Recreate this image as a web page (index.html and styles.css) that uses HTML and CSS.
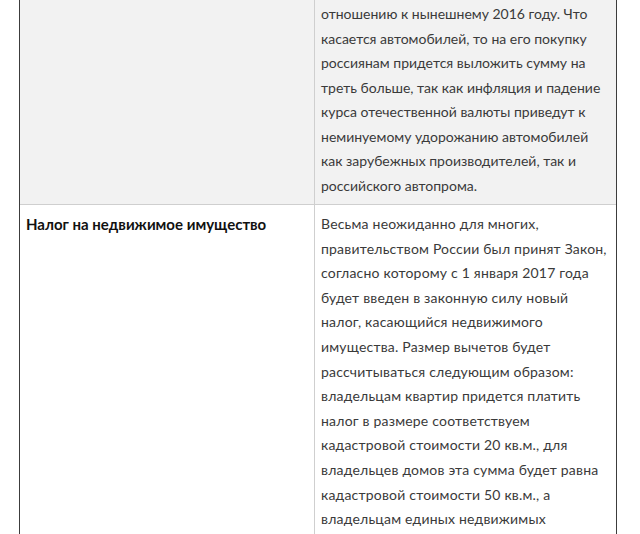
FILE: index.html
```html
<!DOCTYPE html>
<html lang="ru">
<head>
<meta charset="utf-8">
<link rel="stylesheet" href="styles.css">
</head>
<body>
<div class="frame">
<table class="tax">
<tr class="row-shaded">
<td class="label"></td>
<td class="text">отношению к нынешнему 2016 году. Что касается автомобилей, то на его покупку россиянам придется выложить сумму на треть больше, так как инфляция и падение курса отечественной валюты приведут к неминуемому удорожанию автомобилей как зарубежных производителей, так и российского автопрома.</td>
</tr>
<tr class="row-plain">
<td class="label"><strong>Налог на недвижимое имущество</strong></td>
<td class="text">Весьма неожиданно для многих, правительством России был принят Закон, согласно которому с 1 января 2017 года будет введен в законную силу новый налог, касающийся недвижимого имущества. Размер вычетов будет рассчитываться следующим образом: владельцам квартир придется платить налог в размере соответствуем кадастровой стоимости 20 кв.м., для владельцев домов эта сумма будет равна кадастровой стоимости 50 кв.м., а владельцам единых недвижимых комплексов – 100 кв.м.</td>
</tr>
</table>
</div>
</body>
</html>
```
FILE: styles.css
```css
html, body {
  margin: 0;
  padding: 0;
  background: #fff;
  overflow: hidden;
}
body {
  font-family: Lato, "Noto Sans", sans-serif;
  font-size: 14px;
  color: #3a3a3a;
}
.frame {
  margin-left: 19px;
  width: 596px;
  border-left: 1px solid #3c3c3c;
  border-right: 1px solid #3c3c3c;
}
.tax {
  width: 100%;
  border-collapse: collapse;
  table-layout: fixed;
}
.tax td {
  vertical-align: top;
  line-height: 24.5px;
  border: 1px solid #cfcfcf;
}
.tax tr:first-child td {
  border-top: none;
}
.tax td:first-child { border-left: none; }
.tax td:last-child { border-right: none; }
.label {
  width: 282px;
  padding: 7px 6px 6px 6px;
  color: #111;
  font-size: 15px;
}
.text {
  padding: 7px 6px 6px 6px;
}
.row-shaded td {
  background: #f2f2f2;
  padding-top: 2px;
}
.row-plain .text {
  letter-spacing: 0.2px;
  line-height: 24.6px;
}
```
